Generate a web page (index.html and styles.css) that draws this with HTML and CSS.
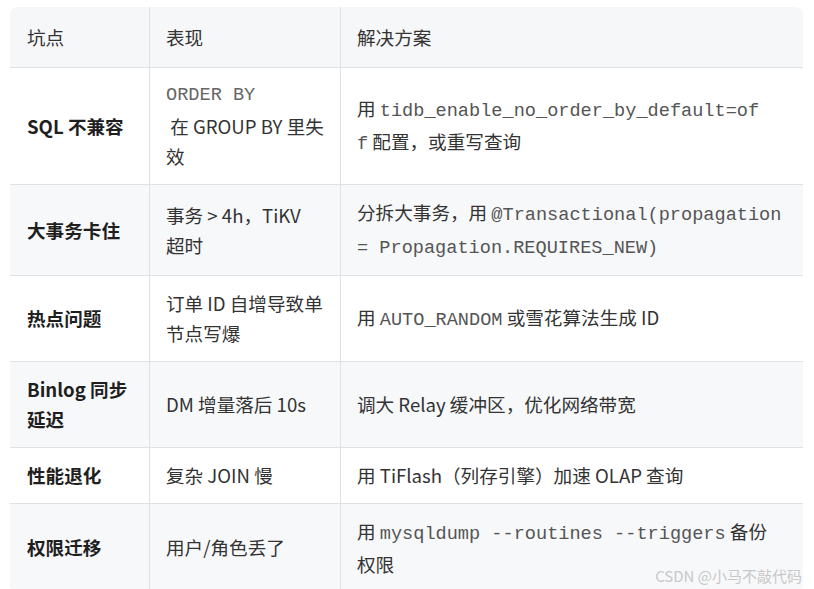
FILE: index.html
```html
<!DOCTYPE html>
<html lang="zh-CN">
<head>
<meta charset="utf-8">
<title>TiDB 迁移坑点</title>
<link rel="stylesheet" href="styles.css">
</head>
<body>
<div class="wrap">
  <table class="tbl">
    <colgroup>
      <col class="c1">
      <col class="c2">
      <col class="c3">
    </colgroup>
    <thead>
      <tr><th>坑点</th><th>表现</th><th>解决方案</th></tr>
    </thead>
    <tbody>
      <tr>
        <td class="key">SQL 不兼容</td>
        <td><code class="code blk">ORDER BY</code>&nbsp;在 GROUP BY 里失效</td>
        <td>用 <code class="code">tidb_enable_no_order_by_default=of<br>f</code> 配置，或重写查询</td>
      </tr>
      <tr class="alt">
        <td class="key">大事务卡住</td>
        <td>事务 &gt; 4h，TiKV<br>超时</td>
        <td>分拆大事务，用 <code class="code">@Transactional(propagation = Propagation.REQUIRES_NEW)</code></td>
      </tr>
      <tr>
        <td class="key">热点问题</td>
        <td>订单 ID 自增导致单节点写爆</td>
        <td>用 <code class="code">AUTO_RANDOM</code> 或雪花算法生成 ID</td>
      </tr>
      <tr class="alt">
        <td class="key">Binlog 同步延迟</td>
        <td>DM 增量落后 10s</td>
        <td>调大 Relay 缓冲区，优化网络带宽</td>
      </tr>
      <tr>
        <td class="key">性能退化</td>
        <td>复杂 JOIN 慢</td>
        <td>用 TiFlash（列存引擎）加速 OLAP 查询</td>
      </tr>
      <tr class="alt">
        <td class="key">权限迁移</td>
        <td>用户/角色丢了</td>
        <td>用 <code class="code">mysqldump --routines --triggers</code> 备份权限</td>
      </tr>
    </tbody>
  </table>
  <div class="mark">CSDN @小马不敲代码</div>
</div>
</body>
</html>
```

FILE: styles.css
```css
html, body {
  margin: 0;
  padding: 0;
  background: #ffffff;
}
body {
  padding: 7px 11px 0 10px;
  font-family: "Noto Sans CJK SC", "Noto Sans", sans-serif;
  font-size: 18.6px;
  color: #333333;
}
.wrap {
  position: relative;
  width: 793px;
}
.tbl {
  width: 793px;
  table-layout: fixed;
  border-collapse: separate;
  border-spacing: 0;
  border-radius: 8px;
  overflow: hidden;
  background: #ffffff;
}
.c1 { width: 139px; }
.c2 { width: 191px; }
.c3 { width: 463px; }
.tbl th,
.tbl td {
  padding: 12px 16px 13px;
  line-height: 30px;
  text-align: left;
  vertical-align: middle;
  border-left: 1px solid #dfe1e5;
  border-top: 1px solid #dfe1e5;
}
.tbl th:first-child,
.tbl td:first-child {
  border-left: none;
  padding-left: 17px;
}
.tbl th:last-child,
.tbl td:last-child {
  padding-right: 19px;
}
.tbl thead th {
  border-top: none;
  font-weight: 400;
  background: #f6f7f9;
  padding-top: 15px;
  padding-bottom: 15px;
  color: #333333;
}
.tbl tr.alt td {
  background: #f7f8fa;
}
.key {
  font-weight: 700;
  color: #1f1f1f;
}
.code {
  font-family: "Liberation Mono", "Courier New", monospace;
  font-size: 18.6px;
  line-height: 27.6px;
  color: #555555;
}
.blk {
  display: block;
  line-height: 31px;
  color: #666666;
}
.mark {
  position: absolute;
  right: 1px;
  bottom: 7px;
  font-size: 15px;
  line-height: 18px;
  color: #c8c8c8;
  font-family: "Noto Sans CJK SC", sans-serif;
}
```
